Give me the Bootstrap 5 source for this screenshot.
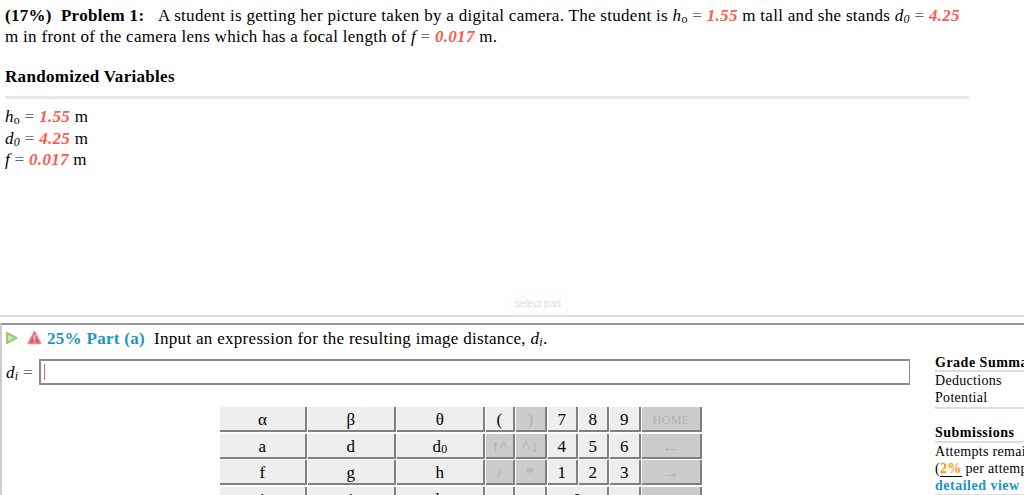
<!DOCTYPE html>
<html lang="en">
<head>
<meta charset="utf-8">
<title>Problem 1</title>
<link href="https://cdn.jsdelivr.net/npm/bootstrap@5.3.0/dist/css/bootstrap.min.css" rel="stylesheet">
<style>
html,body{height:495px;overflow:hidden;background:#fff}
body{font-family:"Liberation Serif","Times New Roman",serif;font-size:17px;letter-spacing:.3px;line-height:21px;color:#000}
.stem{padding:5px 0 0 5px;width:969px}
.stem p{margin:0;white-space:nowrap}
.stem .stem-title{font-weight:700;margin:19px 0 0}
.rule-grey{height:3px;background:#e8e8e8;margin-top:9px}
.val{color:#ff5b4d;font-weight:700;font-style:italic}
.var-list{padding-left:5px;line-height:21.5px;margin-top:7px}
.eq{color:#666}
sub.sm{font-size:12px;bottom:-.2em;line-height:0}
.pick-row{margin:123.5px 0 0 509px;width:58px;height:19px}
.pick-btn{font:10px/17px "Liberation Sans",sans-serif;letter-spacing:0;color:#dcdcdc;border:1px solid #f7f7f7;width:58px;text-align:center;background:#fff}
.sep{height:2px;background:#ddd;margin-top:2px}
.part{margin-top:6px;border-top:2px solid #999;border-left:2px solid #ccc;width:1024px;height:200px}
.part-head{height:26px;padding-left:3px}
.part-pct{color:#2096bb;font-weight:700;margin-left:5px;margin-right:9px}
.warn-ico{margin-left:9px}
.answer{padding-left:4px;height:26px;margin-top:8px}
.ans-box{width:871px;height:26px;border:2px solid #8a8a8a;border-right-width:1px;padding:3px 0 0 3px;margin-left:6px}
.caret-bar{width:1px;height:16px;background:#ff4f8f}
.side{position:absolute;left:935px;top:355px;width:120px;font-size:14px;line-height:17px;white-space:nowrap;letter-spacing:.3px}
.side-h{font-weight:700;letter-spacing:.5px;border-bottom:2px solid #ddd;line-height:15px}
.side-h.low{padding-bottom:1px}
.side-b{border-bottom:2px solid #ddd;padding-bottom:1px;margin-bottom:16px}
.side-foot{border-bottom:2px solid #ddd}
.side-link{color:#2096bb;font-weight:700;letter-spacing:.5px}
.side-pct{color:#ff9500;font-weight:700;border-bottom:1px solid #000}
.keys{display:grid;grid-template-columns:88px 89px 89px 30px 32px 31px 31px 32px 61px;grid-auto-rows:26.7px;margin:22px 0 0 218px;width:683px}
.kk{background:#eee;border-right:2px solid #808080;border-bottom:2px solid #808080;margin:0 1px 1px 0;padding-top:2px;display:flex;align-items:center;justify-content:center;font-size:17px;line-height:1;height:25px}
.kk.off{background:#ccc;color:#b0b0b0}
.kk.sm-t{font-size:12px}
.kk.two{grid-column:span 2}
</style>
</head>
<body>
<div class="stem">
<p><b>(17%)&nbsp; Problem 1:</b> &nbsp;&nbsp;A student is getting her picture taken by a digital camera. The student is <i>h</i><sub class="sm">o</sub> <span class="eq">=</span> <span class="val">1.55</span> m tall and she stands <i>d</i><sub class="sm"><i>0</i></sub> <span class="eq">=</span> <span class="val">4.25</span><br>m in front of the camera lens which has a focal length of <i>f</i> <span class="eq">=</span> <span class="val">0.017</span> m.</p>
<p class="stem-title">Randomized Variables</p>
<div class="rule-grey"></div>
</div>
<div class="var-list">
<div><i>h</i><sub class="sm">o</sub> <span class="eq">=</span> <span class="val">1.55</span> m</div>
<div><i>d</i><sub class="sm"><i>0</i></sub> <span class="eq">=</span> <span class="val">4.25</span> m</div>
<div><i>f</i> <span class="eq">=</span> <span class="val">0.017</span> m</div>
</div>
<div class="pick-row d-flex"><span class="pick-btn">select part</span></div>
<div class="sep"></div>
<div class="part">
<div class="part-head d-flex align-items-center">
<svg width="13" height="14" viewBox="0 0 13 14"><path d="M2 2 11.5 7 2 12Z" fill="#cfe8a8" stroke="#a3c67c" stroke-width="2" stroke-linejoin="round"/></svg>
<svg class="warn-ico" width="15" height="16" viewBox="0 0 15 16"><path d="M7.5 1.5 13.8 13.5H1.2Z" fill="#e25555" stroke="#e88" stroke-width="1.6" stroke-linejoin="round"/><rect x="6.5" y="5" width="2" height="5" fill="#fbe"/><rect x="6.5" y="10.8" width="2" height="1.8" fill="#fbe"/></svg>
<span class="part-pct">25% Part (a)</span><span>Input an expression for the resulting image distance, <i>d</i><sub class="sm"><i>i</i></sub>.</span>
</div>
<div class="answer d-flex align-items-center">
<span><i>d</i><sub class="sm"><i>i</i></sub> <span class="eq">=</span></span>
<div class="ans-box"><div class="caret-bar"></div></div>
</div>
<div class="keys">
<div class="kk">α</div><div class="kk">β</div><div class="kk">θ</div><div class="kk">(</div><div class="kk off">)</div><div class="kk">7</div><div class="kk">8</div><div class="kk">9</div><div class="kk off sm-t">HOME</div>
<div class="kk">a</div><div class="kk">d</div><div class="kk">d<sub class="sm">0</sub></div><div class="kk off">↑^</div><div class="kk off">^↓</div><div class="kk">4</div><div class="kk">5</div><div class="kk">6</div><div class="kk off">←</div>
<div class="kk">f</div><div class="kk">g</div><div class="kk">h</div><div class="kk off">/</div><div class="kk off">*</div><div class="kk">1</div><div class="kk">2</div><div class="kk">3</div><div class="kk off">→</div>
<div class="kk">i</div><div class="kk">j</div><div class="kk">k</div><div class="kk">+</div><div class="kk">-</div><div class="kk two">0</div><div class="kk">.</div><div class="kk off"></div>
</div>
</div>
<div class="side">
<div class="side-h">Grade Summary</div>
<div class="side-b">Deductions<br>Potential</div>
<div class="side-h low">Submissions</div>
<div class="side-foot">Attempts remaining<br>(<span class="side-pct">2%</span> per attempt)<br><span class="side-link">detailed view</span></div>
</div>
</body>
</html>
